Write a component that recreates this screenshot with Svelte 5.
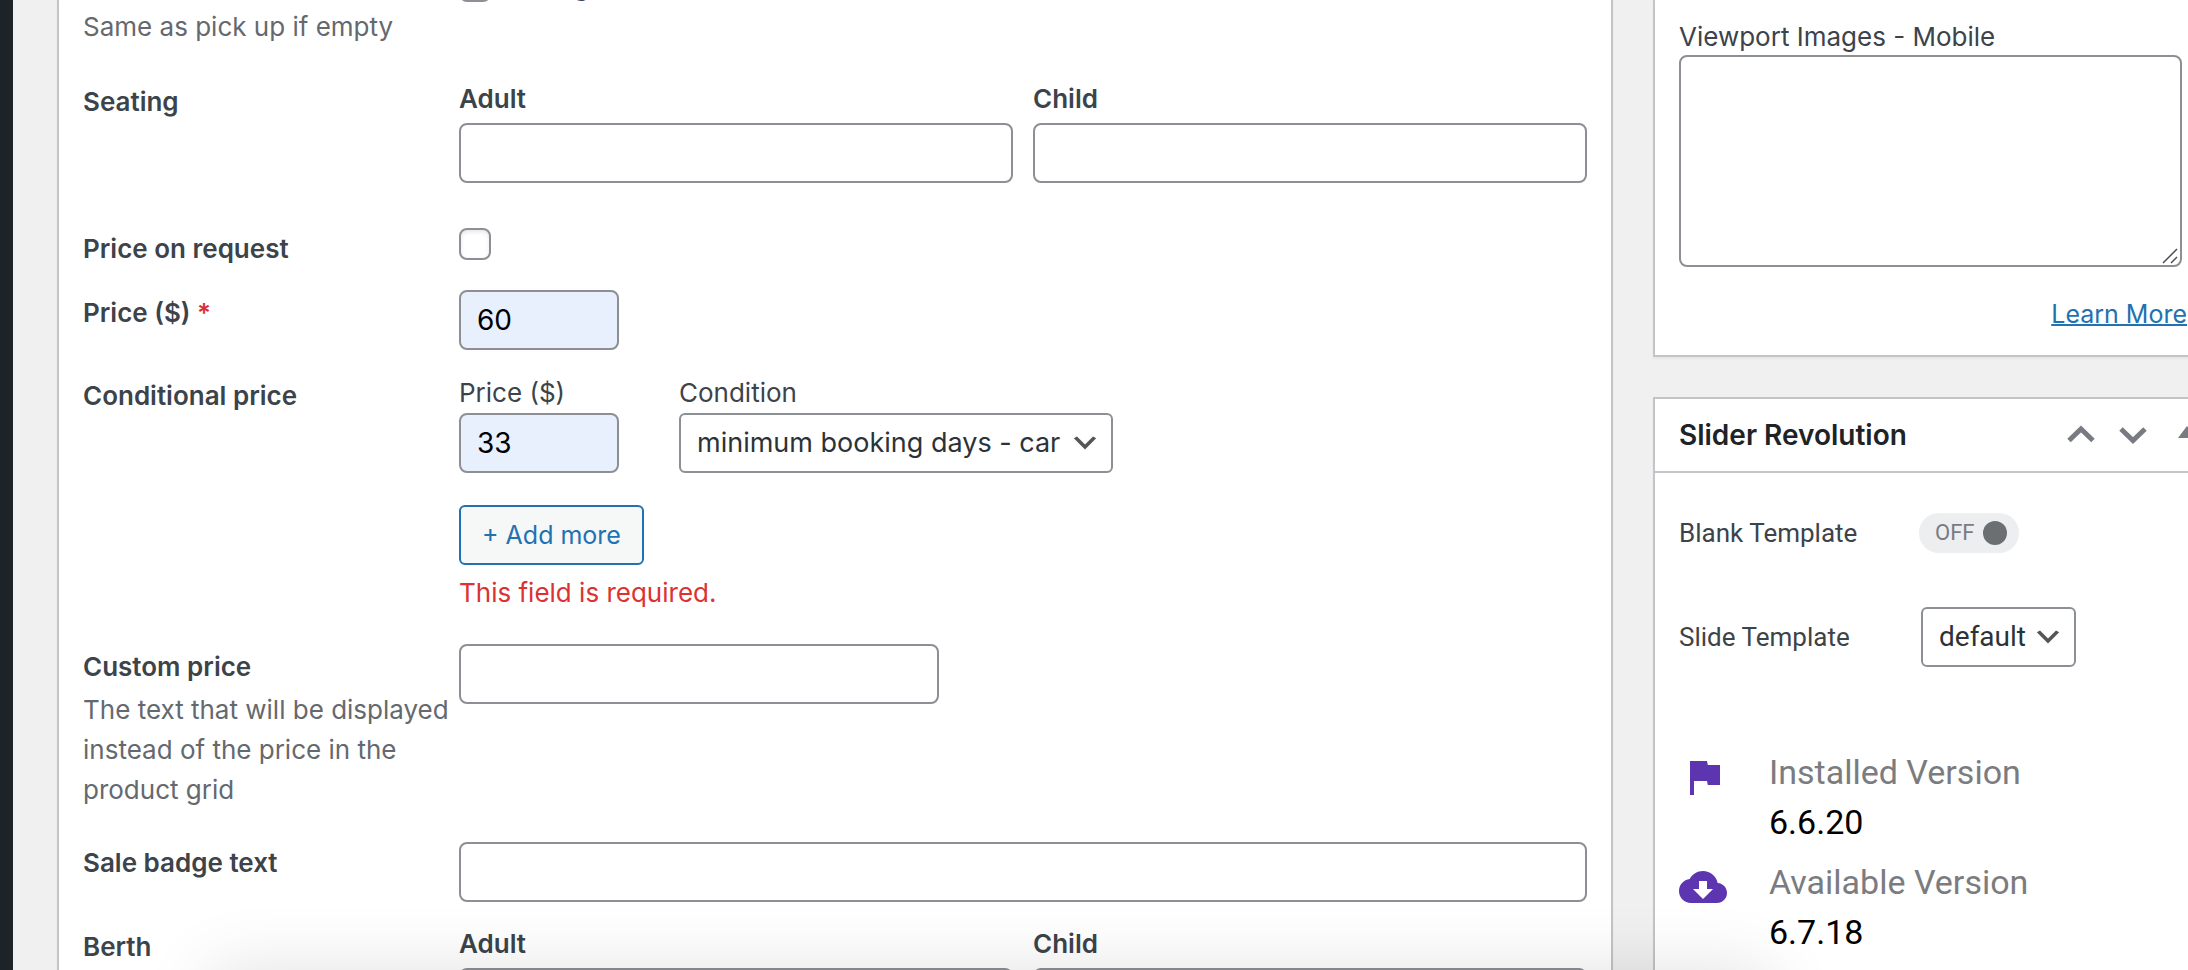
<script>
  const seats = ['Adult', 'Child'];
</script>

<div class="page">
  <div class="rail"></div>

  <main class="panel main">
    <div class="row first">
      <div class="heading"><p class="hint">Same as pick up if empty</p></div>
      <div class="field">
        <label class="location"><input type="checkbox" /><span>Chicago</span></label>
      </div>
    </div>

    <div class="row seating">
      <div class="heading"><strong>Seating</strong></div>
      <div class="pair">
        {#each seats as seat}
          <label class="stack"><strong>{seat}</strong><input type="text" /></label>
        {/each}
      </div>
    </div>

    <div class="row request">
      <div class="heading"><label for="request"><strong>Price on request</strong></label></div>
      <div class="field"><input id="request" type="checkbox" /></div>
    </div>

    <div class="row price">
      <div class="heading"><label for="price"><strong>Price ($) <span class="star">*</span></strong></label></div>
      <div class="field"><input id="price" class="short" type="text" value="60" /></div>
    </div>

    <div class="row conditional">
      <div class="heading"><strong>Conditional price</strong></div>
      <div class="field">
        <div class="conditions">
          <label class="stack tight"><span>Price ($)</span><input class="short" type="text" value="33" /></label>
          <label class="stack tight"><span>Condition</span>
            <span class="select wide">
              <select><option>minimum booking days - car</option></select>
              <svg viewBox="0 0 20 20"><path d="M5 6l5 5 5-5 2 1-7 7-7-7 2-1z" /></svg>
            </span>
          </label>
        </div>
        <button class="add" type="button">+ Add more</button>
        <p class="error">This field is required.</p>
      </div>
    </div>

    <div class="row custom">
      <div class="heading">
        <label for="custom"><strong>Custom price</strong></label>
        <p class="hint">The text that will be displayed instead of the price in the product grid</p>
      </div>
      <div class="field"><input id="custom" class="medium" type="text" /></div>
    </div>

    <div class="row sale">
      <div class="heading"><label for="sale"><strong>Sale badge text</strong></label></div>
      <div class="field"><input id="sale" type="text" /></div>
    </div>

    <div class="row berth">
      <div class="heading"><strong>Berth</strong></div>
      <div class="pair">
        {#each seats as seat}
          <label class="stack"><strong>{seat}</strong><input type="text" /></label>
        {/each}
      </div>
    </div>
  </main>

  <aside class="side">
    <section class="panel images">
      <label for="viewport">Viewport Images - Mobile</label>
      <div class="area">
        <textarea id="viewport"></textarea>
        <svg viewBox="0 0 16 16"><path d="M1 15L15 1M9 15L15 9" /></svg>
      </div>
      <a href="#more">Learn More</a>
    </section>

    <section class="panel slider">
      <header>
        <h2>Slider Revolution</h2>
        <div class="handles">
          <button type="button" aria-label="Move up"><svg viewBox="0 0 40 40"><path d="M8 25.500L20 14L32 25.500" /></svg></button>
          <button type="button" aria-label="Move down"><svg viewBox="0 0 40 40"><path d="M8 14L20 25.500L32 14" /></svg></button>
          <button type="button" aria-label="Toggle panel"><svg class="solid" viewBox="0 0 40 40"><path d="M13 23L22 11L31 23Z" /></svg></button>
        </div>
      </header>
      <div class="body">
        <div class="option blank">
          <span>Blank Template</span>
          <button class="toggle" type="button" role="switch" aria-checked="false" aria-label="Blank Template">OFF<i></i></button>
        </div>
        <div class="option">
          <label for="template">Slide Template</label>
          <span class="select narrow">
            <select id="template"><option>default</option></select>
            <svg viewBox="0 0 20 20"><path d="M5 6l5 5 5-5 2 1-7 7-7-7 2-1z" /></svg>
          </span>
        </div>
        <dl>
          <svg viewBox="0 0 48 48"><path d="M28.800 12L28 8H11v34h4V28h13l.8 4H41V12z" /></svg>
          <div><dt>Installed Version</dt><dd>6.6.20</dd></div>
          <svg viewBox="0 0 48 48"><path fill-rule="evenodd" d="M38.700 20.080C37.340 13.180 31.280 8 24 8c-5.780 0-10.800 3.280-13.300 8.080C4.680 16.720 0 21.820 0 28c0 6.620 5.380 12 12 12h26c5.520 0 10-4.480 10-10 0-5.280-4.100-9.560-9.300-9.920zM34 26L24 36 14 26h6v-8h8v8h6z" /></svg>
          <div><dt>Available Version</dt><dd>6.7.18</dd></div>
        </dl>
      </div>
    </section>
  </aside>

  <div class="shade"></div>
</div>

<style>
  :global(body) {
    margin: 0;
    background: #f0f0f0;
  }
  .page {
    position: relative;
    display: flex;
    height: 100vh;
    overflow: hidden;
    background: #f0f0f0;
    color: #3c434a;
    font: 26px/40px Inter, "Liberation Sans", sans-serif;
  }
  .page * { box-sizing: border-box; }
  p, h2, dl, dd { margin: 0; }
  strong { font-weight: 600; }

  .rail { flex: none; width: 13px; background: #1d2327; }
  .panel { background: #fff; border: 2px solid #c3c4c7; box-shadow: 0 2px 2px rgba(0, 0, 0, 0.04); }
  .main { flex: 1; min-width: 0; height: max-content; margin-left: 44px; padding: 0 24px; border-top: 0; }

  .row { display: grid; grid-template-columns: 376px 1fr; }
  .first { height: 79px; }
  .first .heading { padding-top: 7px; }
  .first .field { margin-top: -34px; }
  .seating { height: 143px; }
  .heading { padding-top: 3px; }
  .request, .price, .custom, .sale { padding-top: 6px; }
  .request, .sale { padding-top: 6px; }
  .request .heading, .sale .heading { padding-top: 1px; }
  .request { height: 62px; }
  .price { height: 84px; }
  .conditional { height: 270px; padding-top: 5px; }
  .custom { height: 198px; }
  .custom .hint { margin-top: 3px; }
  .sale { height: 88px; }
  .berth { height: 143px; }

  .hint { color: #646970; }
  .star, .error { color: #dc3232; }
  .pair { display: grid; grid-template-columns: 1fr 1fr; gap: 20px; }
  .stack { display: flex; flex-direction: column; gap: 4px; }
  .tight { gap: 0; }
  .conditions { display: flex; gap: 60px; }

  input, select, textarea, button { font: inherit; margin: 0; }
  input[type="text"] {
    width: 100%;
    height: 60px;
    padding: 0 16px;
    border: 2px solid #8c8f94;
    border-radius: 8px;
    background: #fff;
    color: #2c3338;
    font-size: 28px;
  }
  input[type="text"].short { width: 160px; background: #e8f0fe; color: #000; }
  input[type="text"].medium { width: 480px; }
  input[type="checkbox"] {
    appearance: none;
    display: block;
    width: 32px;
    height: 32px;
    border: 2px solid #8c8f94;
    border-radius: 8px;
    background: #fff;
    box-shadow: inset 0 2px 4px rgba(0, 0, 0, 0.1);
  }
  .location { display: flex; align-items: center; gap: 12px; }

  .select { position: relative; display: block; height: 60px; }
  .select select {
    appearance: none;
    width: 100%;
    height: 60px;
    padding: 0 40px 0 16px;
    border: 2px solid #8c8f94;
    border-radius: 6px;
    background: #fff;
    color: #2c3338;
    font-size: 27px;
  }
  .select svg { position: absolute; right: 12px; top: 14px; width: 32px; height: 32px; fill: #555; pointer-events: none; }
  .wide { width: 434px; }
  .narrow { width: 155px; }
  .narrow select { font-size: 28px; }

  .add {
    display: block;
    height: 60px;
    margin-top: 32px;
    padding: 0 21px;
    border: 2px solid #2271b1;
    border-radius: 6px;
    background: #f6f7f7;
    color: #2271b1;
    font-size: 25px;
  }
  .error { margin-top: 8px; }

  .side { flex: none; width: 560px; margin: 0 -25px 0 40px; }
  .images { display: flex; flex-direction: column; height: 357px; padding: 17px 24px 0; border-top: 0; }
  .area { position: relative; width: 503px; height: 212px; margin-top: -2px; }
  .area textarea { display: block; width: 100%; height: 100%; border: 2px solid #8c8f94; border-radius: 8px; background: #fff; resize: none; }
  .area svg { position: absolute; right: 4px; bottom: 3px; width: 16px; height: 16px; fill: none; stroke: #505050; stroke-width: 1.500; }
  .images a { align-self: flex-end; margin-top: 27px; color: #2271b1; font-size: 25px; text-decoration-thickness: 2px; }
  .slider { margin-top: 40px; height: 640px; }
  .slider header { display: flex; justify-content: space-between; height: 74px; padding-left: 24px; border-bottom: 2px solid #c3c4c7; }
  h2 { color: #1d2327; font-size: 28px; line-height: 72px; font-weight: 600; }
  .handles { display: flex; align-items: center; }
  .handles button { width: 52px; height: 72px; padding: 6px; border: 0; background: none; }
  .handles svg { display: block; width: 40px; height: 40px; fill: none; stroke: #787c82; stroke-width: 5; }
  .handles .solid { fill: #787c82; stroke: none; }

  .body { padding: 30px 24px; font-family: Roboto, "Liberation Sans", sans-serif; }
  .option { display: grid; grid-template-columns: 242px max-content; align-items: center; height: 60px; }
  .blank { margin-bottom: 44px; grid-template-columns: 240px max-content; }
  .toggle {
    display: flex;
    align-items: center;
    justify-content: space-between;
    width: 100px;
    height: 40px;
    padding: 0 12px 0 16px;
    border: 0;
    border-radius: 20px;
    background: #edeef0;
    color: #787c82;
    font-size: 22px;
  }
  .toggle i { width: 24px; height: 24px; border-radius: 50%; background: #6b6f71; }
  dl { display: grid; grid-template-columns: 90px 1fr; row-gap: 10px; margin-top: 80px; font-size: 34px; line-height: 50px; }
  dl svg { width: 48px; height: 48px; margin-top: 6px; fill: #5e35b1; }
  dt { color: #7b7c80; }
  dd { color: #000; }

  .shade {
    position: absolute;
    left: 210px;
    right: 418px;
    top: 100%;
    height: 100px;
    box-shadow: 0 0 70px rgba(0, 0, 0, 0.12);
    pointer-events: none;
  }
</style>
